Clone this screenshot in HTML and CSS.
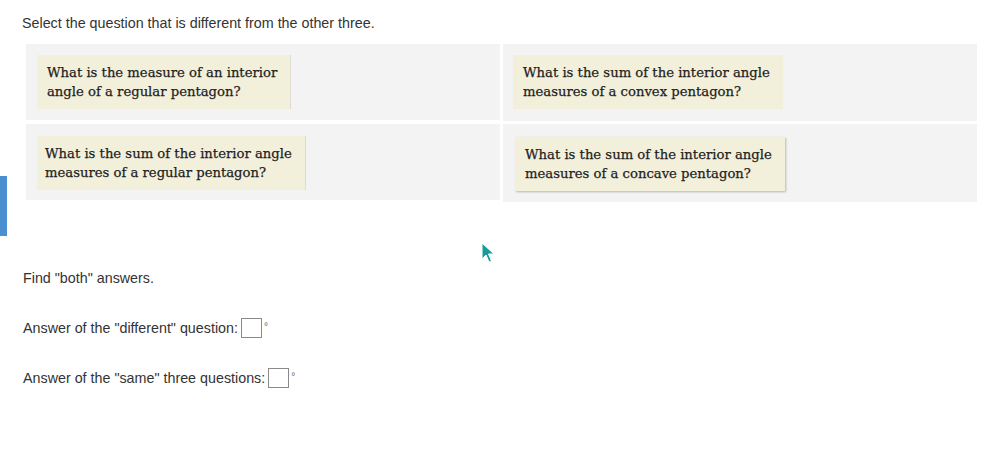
FILE: index.html
```html
<!DOCTYPE html>
<html>
<head>
<meta charset="utf-8">
<link rel="stylesheet" href="styles.css">
</head>
<body>
<div class="side-tab"></div>
<p class="prompt">Select the question that is different from the other three.</p>
<div class="grid">
  <div class="cell c1"><div class="card edge">What is the measure of an interior<br>angle of a regular pentagon?</div></div>
  <div class="cell c2"><div class="card">What is the sum of the interior angle<br>measures of a convex pentagon?</div></div>
  <div class="cell c3"><div class="card edge">What is the sum of the interior angle<br>measures of a regular pentagon?</div></div>
  <div class="cell c4"><div class="card lifted">What is the sum of the interior angle<br>measures of a concave pentagon?</div></div>
</div>
<svg class="cursor" width="14" height="22" viewBox="0 0 14 22">
  <path d="M1 1 L1 17 L5 13 L8 20 L10.5 19 L7.5 12 L13 12 Z" fill="#169c9c" stroke="#ffffff" stroke-width="1"/>
</svg>
<div class="answers">
  <p class="line">Find "both" answers.</p>
  <p class="line">Answer of the "different" question:<span class="box"></span><span class="deg">°</span></p>
  <p class="line">Answer of the "same" three questions:<span class="box"></span><span class="deg">°</span></p>
</div>
</body>
</html>
```
FILE: styles.css
```css
html, body {
  margin: 0;
  padding: 0;
  background: #ffffff;
}
body {
  position: relative;
  width: 983px;
  height: 458px;
  overflow: hidden;
  font-family: "Liberation Sans", Arial, sans-serif;
  font-size: 14.3px;
  color: #333333;
}
.side-tab {
  position: absolute;
  left: 0;
  top: 176px;
  width: 7px;
  height: 60px;
  background: #4a8fcf;
}
.prompt {
  margin: 0;
  padding: 15px 0 0 22px;
  line-height: 16px;
}
.grid {
  display: grid;
  grid-template-columns: 474px 474px;
  column-gap: 3px;
  row-gap: 3px;
  margin: 13px 0 0 26px;
  align-items: start;
}
.cell {
  background: #f3f3f3;
  padding: 11px;
}
.c2 { padding: 11px 10px 12px; }
.c3 { padding: 12px 11px 10px; }
.c4 { padding: 13px 12px 11px; }
.card {
  width: fit-content;
  background: #f2efdb;
  font-family: "DejaVu Serif", Georgia, serif;
  font-size: 13.2px;
  line-height: 19px;
  color: #1e1e1e;
  -webkit-text-stroke: 0.25px #1e1e1e;
  padding: 8px 13px 8px 10px;
}
.c3 .card { padding-left: 8px; }
.edge {
  border-right: 1px solid #dcdcd0;
}
.lifted {
  box-shadow: 1px 1px 2px rgba(0,0,0,0.25);
}
.cursor {
  position: absolute;
  left: 481px;
  top: 242px;
}
.answers {
  margin: 67px 0 0 23px;
}
.line {
  margin: 0 0 30px 0;
  line-height: 19px;
  display: flex;
  align-items: center;
}
.box {
  display: inline-block;
  width: 19px;
  height: 18px;
  border: 1px solid #8a8a8a;
  margin-left: 3px;
  background: #fff;
}
.deg {
  font-size: 10px;
  color: #666;
  align-self: flex-start;
  margin-left: 2px;
  margin-top: -1px;
}
```
